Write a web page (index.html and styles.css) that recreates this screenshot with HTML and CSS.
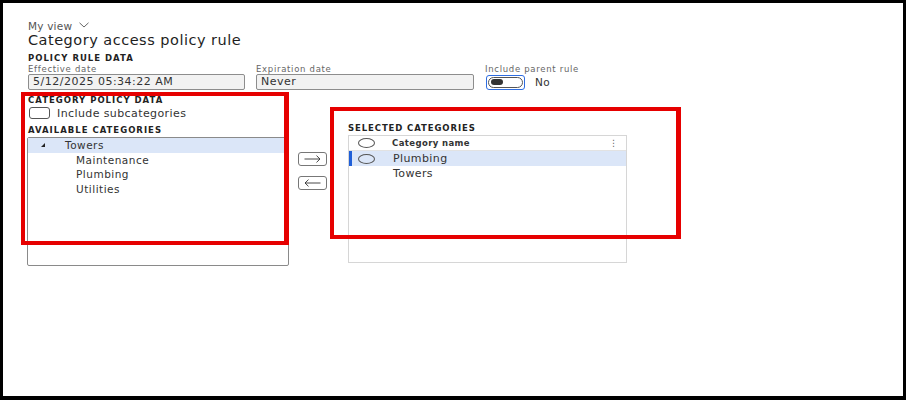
FILE: index.html
```html
<!DOCTYPE html>
<html lang="en">
<head>
  <meta charset="UTF-8">
  <title>Category access policy rule</title>
  <link rel="stylesheet" href="styles.css">
</head>
<body>
  <div class="frame">
    <div class="my-view">My view
      <svg class="chev" width="10" height="6" viewBox="0 0 10 6"><path d="M0.5 0.8 L5 5 L9.5 0.8" fill="none" stroke="#555" stroke-width="0.9"/></svg>
    </div>
    <h1 class="title">Category access policy rule</h1>

    <div class="section-label">POLICY RULE DATA</div>
    <div class="field-row">
      <div class="field">
        <div class="field-label">Effective date</div>
        <div class="input">5/12/2025 05:34:22 AM</div>
      </div>
      <div class="field">
        <div class="field-label">Expiration date</div>
        <div class="input">Never</div>
      </div>
      <div class="field">
        <div class="field-label">Include parent rule</div>
        <div class="toggle-row">
          <span class="toggle"><span class="knob"></span></span>
          <span class="toggle-text">No</span>
        </div>
      </div>
    </div>

    <div class="bottom">
      <!-- available -->
      <div class="col-left">
        <div class="section-label">CATEGORY POLICY DATA</div>
        <div class="check-row">
          <span class="checkbox"></span>
          <span>Include subcategories</span>
        </div>
        <div class="section-label avail">AVAILABLE CATEGORIES</div>
        <div class="tree">
          <div class="tree-row selected"><span class="caret"></span>Towers</div>
          <div class="tree-row child">Maintenance</div>
          <div class="tree-row child">Plumbing</div>
          <div class="tree-row child">Utilities</div>
        </div>
      </div>

      <!-- move buttons -->
      <div class="col-buttons">
        <button class="move-btn" title="Add">
          <svg width="17" height="8" viewBox="0 0 17 8"><path d="M0.5 4 H16 M12.5 0.6 L16 4 L12.5 7.4" fill="none" stroke="#333" stroke-width="0.9"/></svg>
        </button>
        <button class="move-btn" title="Remove">
          <svg width="17" height="8" viewBox="0 0 17 8"><path d="M16.5 4 H1 M4.5 0.6 L1 4 L4.5 7.4" fill="none" stroke="#333" stroke-width="0.9"/></svg>
        </button>
      </div>

      <!-- selected -->
      <div class="col-right">
        <div class="section-label">SELECTED CATEGORIES</div>
        <div class="grid">
          <div class="grid-row head">
            <span class="radio"></span>
            <span class="col-name">Category name</span>
            <span class="more">&#8942;</span>
          </div>
          <div class="grid-row active">
            <span class="radio"></span>
            <span class="cell">Plumbing</span>
          </div>
          <div class="grid-row">
            <span class="radio blank"></span>
            <span class="cell">Towers</span>
          </div>
        </div>
      </div>
    </div>

    <!-- annotation boxes -->
    <div class="mark mark-left"></div>
    <div class="mark mark-right"></div>
  </div>
</body>
</html>
```

FILE: styles.css
```css
body {
  margin: 0;
  background: #fff;
}

.frame {
  position: relative;
  width: 906px;
  height: 400px;
  box-sizing: border-box;
  border: 3px solid #000;
  border-bottom-width: 4px;
  padding: 17px 0 0 25px;
  font-family: "DejaVu Sans", sans-serif;
  color: #262626;
  overflow: hidden;
}

.my-view {
  font-size: 10.5px;
  line-height: 12px;
  color: #555;
  letter-spacing: 0.2px;
}

.chev {
  margin-left: 3px;
  vertical-align: 2px;
}

.title {
  margin: 0;
  font-size: 14.5px;
  line-height: 16px;
  font-weight: 400;
  letter-spacing: 0.5px;
  color: #1e1e1e;
}

.section-label {
  margin-top: 5px;
  font-size: 8.5px;
  line-height: 10px;
  font-weight: 700;
  letter-spacing: 1px;
  color: #222;
}

.field-row {
  display: flex;
  gap: 11px;
}

.field-label {
  margin-top: 2px;
  font-size: 8.5px;
  line-height: 9px;
  color: #666;
  letter-spacing: 0.7px;
}

.input {
  box-sizing: border-box;
  width: 217px;
  height: 16px;
  border: 1px solid #8d8d8d;
  border-radius: 2px;
  background: #f2f2f2;
  padding-left: 4px;
  font-size: 11px;
  line-height: 14px;
  letter-spacing: 0.5px;
  color: #333;
}

.field:nth-child(2) .input {
  width: 218px;
}

.toggle-row {
  display: flex;
  align-items: center;
  height: 16px;
  margin-left: 1px;
}

.toggle {
  box-sizing: border-box;
  width: 39px;
  height: 15px;
  border: 1.5px solid #2f6de0;
  border-radius: 3px;
  padding: 1px;
  display: flex;
}

.knob {
  display: block;
  flex: 1;
  border: 1px solid #555;
  border-radius: 6px;
  position: relative;
}

.knob::after {
  content: "";
  position: absolute;
  left: 2px;
  top: 1.5px;
  width: 12px;
  height: 6px;
  border-radius: 4px;
  background: #333;
}

.toggle-text {
  margin-left: 10px;
  font-size: 10.5px;
  letter-spacing: 0.4px;
  color: #333;
}

.bottom {
  display: flex;
  align-items: flex-start;
}

.col-left {
  width: 262px;
  padding-top: 5px;
}

.col-left .section-label {
  margin-top: 0;
}

.check-row {
  display: flex;
  align-items: center;
  gap: 7px;
  margin-top: 2px;
  margin-left: 1px;
  height: 12px;
  font-size: 11px;
  letter-spacing: 0.4px;
  color: #333;
}

.checkbox {
  box-sizing: border-box;
  width: 21px;
  height: 12px;
  border: 1px solid #555;
  border-radius: 3px;
}

.col-left .avail {
  margin-top: 6px;
}

.tree {
  box-sizing: border-box;
  margin: 2px 0 0 -1px;
  width: 262px;
  height: 129px;
  border: 1px solid #8a8a8a;
  border-radius: 2px;
}

.tree-row {
  height: 14.5px;
  line-height: 15px;
  font-size: 10.5px;
  letter-spacing: 0.5px;
  color: #333;
}

.tree-row.selected {
  background: #dbe6f8;
  padding-left: 37px;
  position: relative;
}

.caret {
  position: absolute;
  left: 13px;
  top: 5px;
  width: 0;
  height: 0;
  border-left: 4px solid transparent;
  border-bottom: 4px solid #222;
}

.tree-row.child {
  padding-left: 48px;
}

.col-buttons {
  display: flex;
  flex-direction: column;
  gap: 10px;
  margin: 62px 0 0 8px;
}

.move-btn {
  box-sizing: border-box;
  width: 29px;
  height: 14px;
  padding: 0;
  border: 1px solid #777;
  border-radius: 3px;
  background: #fff;
  display: flex;
  align-items: center;
  justify-content: center;
}

.col-right {
  margin: 33px 0 0 21px;
}

.col-right .section-label {
  margin-top: 0;
  letter-spacing: 0.9px;
}

.grid {
  box-sizing: border-box;
  margin-top: 2px;
  width: 279px;
  height: 128px;
  border: 1px solid #d6d6d6;
}

.grid-row {
  display: flex;
  align-items: center;
  height: 15px;
  position: relative;
}

.grid-row.head {
  height: 14px;
  border-bottom: 1px solid #e2e2e2;
}

.grid-row.active {
  background: #dbe6f8;
}

.grid-row.active::before {
  content: "";
  position: absolute;
  left: 0;
  top: 0;
  bottom: 0;
  width: 3px;
  background: #1f5fd8;
}

.radio {
  box-sizing: border-box;
  width: 17px;
  height: 10px;
  margin-left: 9px;
  border: 1px solid #555;
  border-radius: 50%;
}

.radio.blank {
  visibility: hidden;
}

.col-name {
  margin-left: 17px;
  font-size: 8.5px;
  font-weight: 700;
  letter-spacing: 0.4px;
  color: #333;
}

.more {
  margin-left: auto;
  margin-right: 8px;
  font-size: 9px;
  color: #666;
}

.cell {
  margin-left: 18px;
  font-size: 11px;
  letter-spacing: 0.4px;
  color: #333;
}

.mark {
  position: absolute;
  box-sizing: border-box;
  border: 4px solid #e60000;
  border-right-width: 5px;
}

.mark-left {
  left: 18px;
  top: 89px;
  width: 268px;
  height: 153px;
}

.mark-right {
  left: 327px;
  top: 104px;
  width: 351px;
  height: 132px;
}
```
